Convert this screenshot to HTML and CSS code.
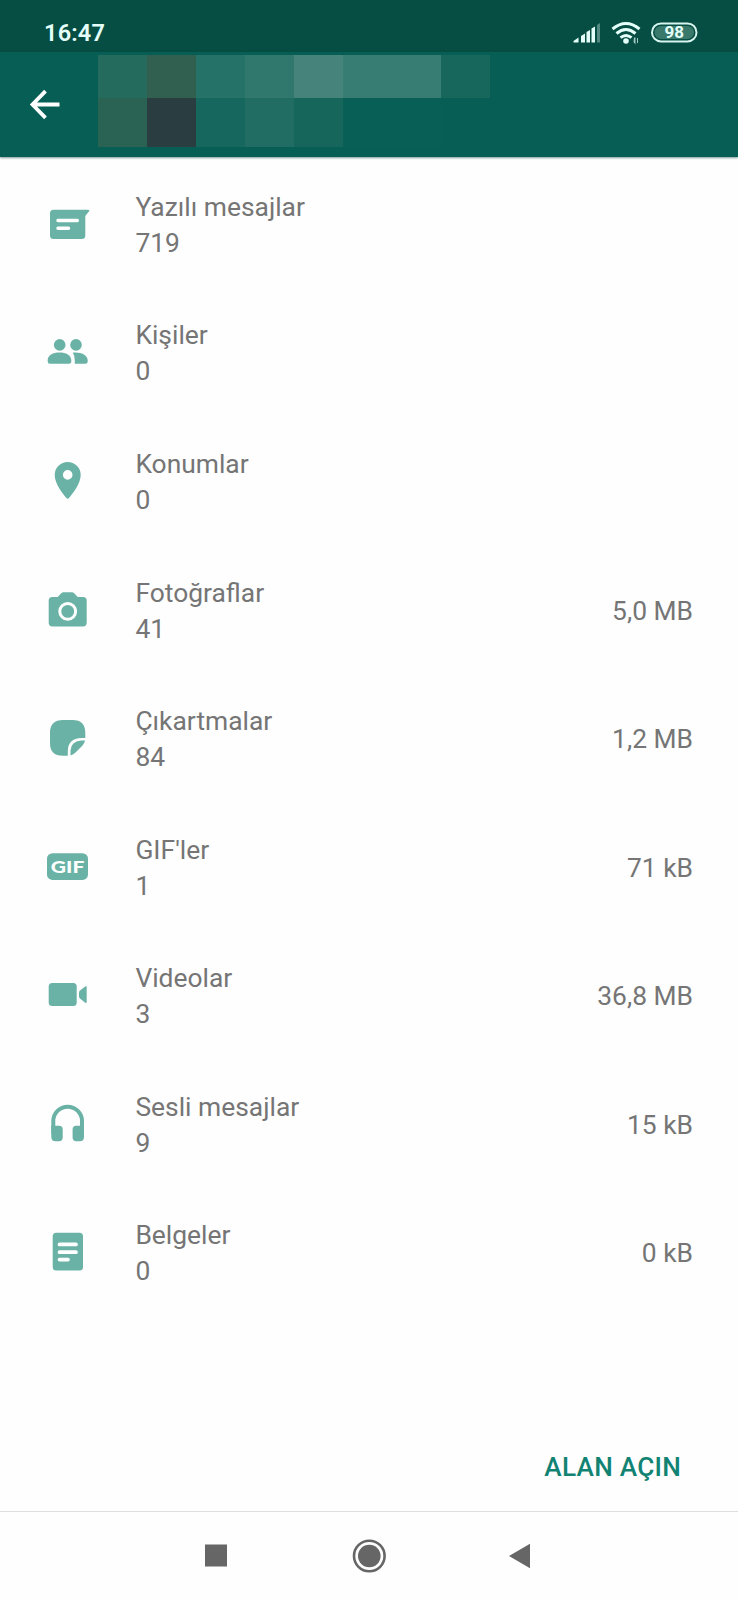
FILE: index.html
```html
<!DOCTYPE html>
<html lang="tr">
<head>
<meta charset="utf-8">
<title>Depolama kullanımı</title>
<link rel="stylesheet" href="styles.css">
</head>
<body>
<div class="screen">
  <div class="status">
    <span class="time">16:47</span>
    <svg class="indicators" width="130" height="28" viewBox="0 0 130 28">
      <g fill="#e4fff9">
        <path d="M.5 23.500v-1.500l5-3.500v5zM8 23.500v-6.500l4-2.500v9zM13.500 23.500V13l3.500-2v12.500zM18.500 23.500V9.500l3.500-2v16z"/>
        <path d="M24 23.500V6l3-2v19.500z" opacity=".35"/>
        <circle cx="53" cy="22" r="2.800"/>
        <path d="M61 18.500h1.500v7l-2-2.500zM64 19v5h1v-5z" opacity=".7"/>
      </g>
      <g fill="none" stroke="#e4fff9" stroke-width="3">
        <path d="M39.500 10q13.500-11 27 0M43.500 14.500q9.500-8 19 0M47.500 18.700q5.500-4.500 11 0"/>
      </g>
      <rect x="79" y="4.400" width="44.500" height="18" rx="9" fill="none" stroke="#d5f5ee" stroke-width="2"/>
      <rect x="81.500" y="6.900" width="39.500" height="13" rx="6.500" fill="#39796c"/>
      <text class="battery" x="101.300" y="19.300">98</text>
    </svg>
  </div>
  <header class="appbar">
    <svg class="back" width="32" height="32" viewBox="0 0 32 32"><path d="M17.500 2.200L4.500 15.500l13 13.300M5 15.500h26.500" fill="none" stroke="#fff" stroke-width="3.800"/></svg>
    <div class="mosaic">
      <i class="a1"></i><i class="a2"></i><i class="a3"></i><i class="a4"></i><i class="a5"></i><i class="a6"></i><i class="a6"></i><i class="a8"></i>
      <i class="b1"></i><i class="b2"></i><i class="b3"></i><i class="b4"></i><i class="b5"></i><i class="b6"></i><i class="b6"></i><i></i>
    </div>
  </header>
  <main class="list">
    <div class="row">
      <svg class="icon" viewBox="0 0 48 48"><path fill-rule="evenodd" d="M9.500 8.700H44.300q1.700 0 .8 1.500L41.300 15V34.500q0 3.500-3.500 3.500H9.500Q6 38 6 34.500V12.200q0-3.500 3.500-3.500z"/><path d="M14 19.500H33.300M14 27.200H24.500" stroke="#fff" stroke-width="3.500" stroke-linecap="round"/></svg>
      <div class="text"><div>Yazılı mesajlar</div><div>719</div></div>
    </div>
    <div class="row">
      <svg class="icon" viewBox="0 0 48 48"><circle cx="15.700" cy="15.900" r="5.800"/><circle cx="32" cy="15.900" r="5.800"/><path d="M3.700 31.500C3.700 26 9 23.500 15.500 23.500S27.300 26 27.300 31.500V32.500q0 2.300-2.300 2.300H6q-2.300 0-2.300-2.300zM28.800 23.700C38 23 43.700 26.500 43.700 31.500v1q0 2.300-2.300 2.300H30.800V31.500Q30.800 26.500 28.800 23.700z"/></svg>
      <div class="text"><div>Kişiler</div><div>0</div></div>
    </div>
    <div class="row">
      <svg class="icon" viewBox="0 0 48 48"><path fill-rule="evenodd" d="M23.700 3.900a13 13 0 0 1 13 13c0 9.500-9 19.500-11.700 23q-1.300 1.500-2.600 0C19.700 36.400 10.700 26.400 10.700 16.900a13 13 0 0 1 13-13zm0 8.200a4.800 4.800 0 1 0 0 9.600 4.800 4.800 0 0 0 0-9.600z"/></svg>
      <div class="text"><div>Konumlar</div><div>0</div></div>
    </div>
    <div class="row">
      <svg class="icon" viewBox="0 0 48 48"><path d="M19.500 5.300h8.500q1.200 0 2.200 1L33.700 10H39q3.700 0 3.700 3.700v22q0 3.700-3.700 3.700H8.400q-3.700 0-3.700-3.700v-22Q4.700 10 8.400 10h5.300l3.600-3.700q1-1 2.200-1z"/><circle cx="23.700" cy="24.400" r="7.900" fill="none" stroke="#fff" stroke-width="3"/></svg>
      <div class="text"><div>Fotoğraflar</div><div>41</div></div>
      <div class="size">5,0 MB</div>
    </div>
    <div class="row">
      <svg class="icon" viewBox="0 0 48 48"><path d="M19 5.100h9.500C37 5.100 41.300 9.300 41.300 17.800V22.900h-3.800Q24 23.300 23.800 36v4.700H19C10 40.700 6 36.700 6 28V17.800C6 9.300 10.500 5.100 19 5.100zM26.500 40.500V35.500Q27 26.300 37 25.500h4Q40.500 28.500 38.300 30.700L31.500 37.500Q29.500 39.500 26.500 40.500z"/></svg>
      <div class="text"><div>Çıkartmalar</div><div>84</div></div>
      <div class="size">1,2 MB</div>
    </div>
    <div class="row">
      <svg class="icon" viewBox="0 0 48 48"><rect x="3" y="9.200" width="41" height="26.700" rx="5.500"/><text class="gif" x="6.800" y="28.600" textLength="33.500" lengthAdjust="spacingAndGlyphs">GIF</text></svg>
      <div class="text"><div>GIF'ler</div><div>1</div></div>
      <div class="size">71 kB</div>
    </div>
    <div class="row">
      <svg class="icon" viewBox="0 0 48 48"><rect x="4.700" y="11" width="28" height="23" rx="3.500"/><path d="M42.700 15.500v14.500q0 1.500-1.500.7L36 26.500q-1-1-1-2v-4q0-1 1-2l5.200-4q1.500-.7 1.500 1z"/></svg>
      <div class="text"><div>Videolar</div><div>3</div></div>
      <div class="size">36,8 MB</div>
    </div>
    <div class="row">
      <svg class="icon" viewBox="0 0 48 48"><path d="M9.300 33V20A14.300 14.300 0 0 1 38 20V33" fill="none" stroke="#6ab2a6" stroke-width="4"/><path d="M7.300 24.800H15q3.700 0 3.700 3.700v8q0 3.700-3.700 3.700H11.500q-4.200 0-4.200-4.200zM40 24.800H32.300q-3.700 0-3.700 3.700v8q0 3.700 3.700 3.700h3.500q4.200 0 4.200-4.200z"/></svg>
      <div class="text"><div>Sesli mesajlar</div><div>9</div></div>
      <div class="size">15 kB</div>
    </div>
    <div class="row">
      <svg class="icon" viewBox="0 0 48 48"><rect x="8.700" y="3.800" width="30.300" height="37.700" rx="3.500"/><path d="M15.500 15.400H32M15.500 23.200H32M15.500 30.600H24" stroke="#fff" stroke-width="3.700" stroke-linecap="round"/></svg>
      <div class="text"><div>Belgeler</div><div>0</div></div>
      <div class="size">0 kB</div>
    </div>
  </main>
  <div class="action"><span class="free">ALAN AÇIN</span></div>
  <nav class="nav">
    <svg width="738" height="88" viewBox="0 0 738 88" fill="#666">
      <rect x="205" y="32.500" width="22" height="22"/>
      <circle cx="369.300" cy="44" r="11.300"/>
      <circle cx="369.300" cy="44" r="15.300" fill="none" stroke="#666" stroke-width="2.600"/>
      <path d="M509 44L530 31.700v24.500z"/>
    </svg>
  </nav>
</div>
</body>
</html>
```
FILE: styles.css
```css
body {
  margin: 0;
  background: #fefefe;
  font-family: Roboto, "Liberation Sans", sans-serif;
  color: #757575;
}
.screen {
  width: 738px;
  height: 1600px;
  display: flex;
  flex-direction: column;
  overflow: hidden;
}
.status {
  height: 52px;
  flex: none;
  box-sizing: border-box;
  padding: 19px 35px 0 44px;
  display: flex;
  justify-content: space-between;
  background: #064d43;
}
.time {
  font-size: 23.5px;
  line-height: 28px;
  font-weight: 600;
  letter-spacing: 0.2px;
  color: #e4fff9;
}
.battery {
  font-size: 17px;
  font-weight: 700;
  fill: #e4fff9;
  text-anchor: middle;
}
.appbar {
  height: 105px;
  flex: none;
  box-sizing: border-box;
  padding: 3px 0 0 28px;
  display: flex;
  background: #075e54;
  box-shadow: 0 1px 2px rgba(0, 60, 50, 0.5);
}
.back {
  margin-top: 34px;
}
.mosaic {
  margin-left: 38px;
  display: grid;
  grid-template-columns: repeat(8, 49px);
  grid-template-rows: 43px 49px;
}
.a1 { background: #246b5d; }
.a2 { background: #315f50; }
.a3 { background: #257268; }
.a4 { background: #30786d; }
.a5 { background: #45837b; }
.a6 { background: #387d73; }
.a8 { background: #17675d; }
.b1 { background: #2a6353; }
.b2 { background: #2a3d40; }
.b3 { background: #16675d; }
.b4 { background: #216d64; }
.b5 { background: #17665c; }
.b6 { background: #085f55; }
.list {
  flex: none;
  padding-top: 3.6px;
}
.row {
  height: 128.56px;
  padding: 0 45px 0 44px;
  display: flex;
  align-items: center;
}
.icon {
  width: 48px;
  height: 48px;
  flex: none;
  fill: #6ab2a6;
}
.gif {
  font-family: Lato, sans-serif;
  font-size: 17.5px;
  font-weight: 900;
  fill: #fff;
}
.text {
  margin-left: 43.4px;
  flex: 1;
}
.text,
.size {
  font-size: 26.4px;
  line-height: 36px;
}
.action {
  flex: 1;
  display: flex;
  justify-content: flex-end;
  align-items: flex-end;
  padding: 0 57px 26px 0;
}
.free {
  font-size: 26.2px;
  line-height: 36px;
  font-weight: 500;
  letter-spacing: 0.25px;
  color: #128373;
}
.nav {
  height: 88px;
  flex: none;
  border-top: 1px solid #dedede;
}
```
